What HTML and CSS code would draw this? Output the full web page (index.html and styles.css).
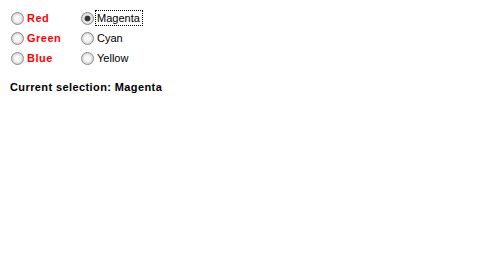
FILE: index.html
```html
<!DOCTYPE html>
<html>
<head>
<meta charset="utf-8">
<link rel="stylesheet" href="styles.css">
</head>
<body>
<div class="app">
  <div class="options">
    <div class="opt"><span class="radio"></span><span class="label bold red">Red</span></div>
    <div class="opt"><span class="radio checked"></span><span class="label focus">Magenta</span></div>
    <div class="opt"><span class="radio"></span><span class="label bold red">Green</span></div>
    <div class="opt"><span class="radio"></span><span class="label">Cyan</span></div>
    <div class="opt"><span class="radio"></span><span class="label bold red">Blue</span></div>
    <div class="opt"><span class="radio"></span><span class="label">Yellow</span></div>
  </div>
  <div class="status">Current selection: Magenta</div>
</div>
</body>
</html>
```
FILE: styles.css
```css
html, body {
  margin: 0;
  padding: 0;
  background: #ffffff;
}
.app {
  width: 480px;
  height: 272px;
  font-family: "Liberation Sans", Arial, sans-serif;
  font-size: 11px;
  color: #000;
  padding: 8px 0 0 11px;
  box-sizing: border-box;
}
.options {
  display: grid;
  grid-template-columns: 70px auto;
  grid-auto-rows: 20px;
}
.opt {
  display: flex;
  align-items: center;
}
.radio {
  width: 13px;
  height: 13px;
  box-sizing: border-box;
  border-radius: 50%;
  border: 1px solid #8a8a8a;
  background: radial-gradient(circle at 50% 50%, #ffffff 0, #f4f4f4 3px, #dcdcdc 5px, #cfcfcf 6px);
  position: relative;
  flex: none;
}
.radio.checked::after {
  content: "";
  position: absolute;
  left: 3px;
  top: 3px;
  width: 5px;
  height: 5px;
  border-radius: 50%;
  background: #333333;
  box-shadow: 0 0 0 0.5px #555;
}
.label {
  margin-left: 1px;
  padding: 0 1px;
  border: 1px dotted transparent;
  line-height: 14px;
  white-space: nowrap;
}
.label.focus {
  border-color: #000;
  padding-right: 2px;
}
.bold {
  font-weight: bold;
  letter-spacing: 0.5px;
}
.red {
  color: #ff0000;
}
.status {
  margin-top: 12px;
  margin-left: -1px;
  font-weight: bold;
  letter-spacing: 0.4px;
  line-height: 14px;
}
```
